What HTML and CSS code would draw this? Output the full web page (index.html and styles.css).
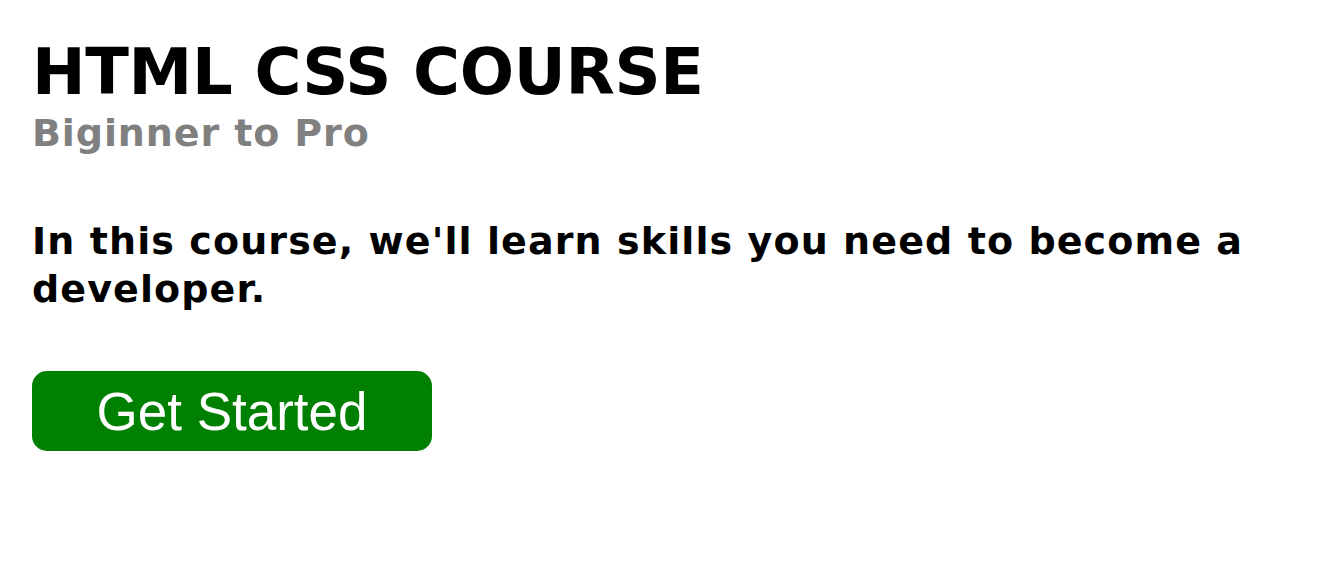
FILE: index.html
```html
<!DOCTYPE html>
<html>
<head>
<meta charset="utf-8">
<link rel="stylesheet" href="styles.css">
</head>
<body>
<main class="page">
  <h1 class="title">HTML CSS COURSE</h1>
  <p class="subtitle">Biginner to Pro</p>
  <p class="intro">In this course, we'll learn skills you need to become a developer.</p>
  <button class="cta">Get Started</button>
</main>
</body>
</html>
```
FILE: styles.css
```css
body {
  margin: 0;
  background: #fff;
}
.page {
  padding: 32px 32px;
  font-family: "DejaVu Sans", Verdana, sans-serif;
}
.title {
  margin: 0;
  font-size: 64px;
  font-weight: bold;
  line-height: 80px;
  letter-spacing: -0.3px;
  color: #000;
}
.subtitle {
  margin: 0;
  font-size: 38px;
  font-weight: bold;
  line-height: 42px;
  letter-spacing: 0.9px;
  color: #808080;
}
.intro {
  margin: 63px 0 0;
  font-size: 38px;
  font-weight: bold;
  line-height: 48px;
  letter-spacing: 1.1px;
  color: #000;
}
.cta {
  display: block;
  margin-top: 58px;
  width: 400px;
  height: 80px;
  border: none;
  border-radius: 15px;
  background: #008000;
  color: #fff;
  font-family: "Liberation Sans", Arial, sans-serif;
  font-size: 53px;
  padding: 0;
}
```
